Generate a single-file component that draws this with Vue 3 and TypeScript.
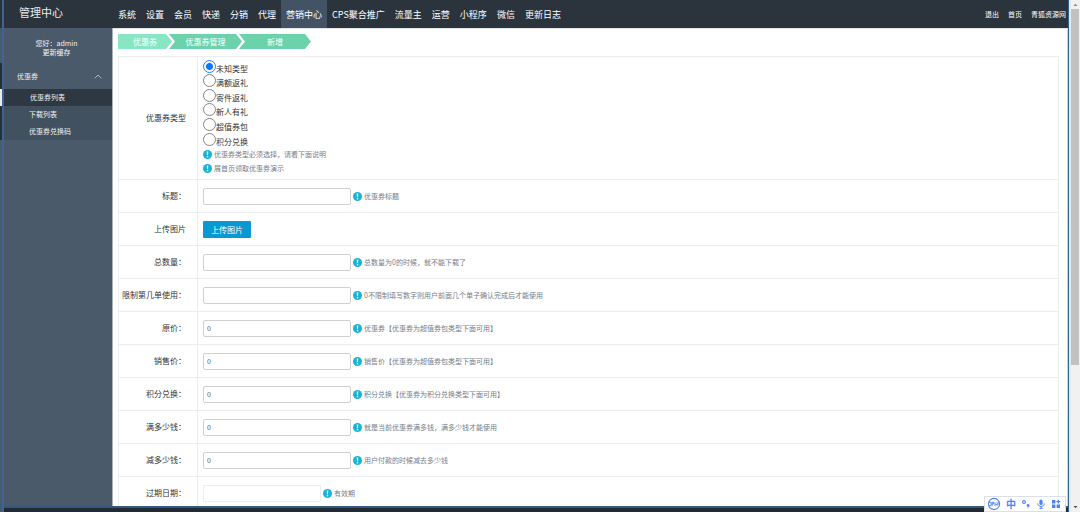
<script setup lang="ts">
import { ref } from 'vue'

interface Field {
  id: string
  label: string
  hint?: string
  value?: string
  kind: 'text' | 'upload' | 'date'
}

const navItems = ['系统', '设置', '会员', '快递', '分销', '代理', '营销中心', 'CPS聚合推广', '流量主', '运营', '小程序', '微信', '更新日志']
const activeNav = '营销中心'
const userLinks = ['退出', '首页', '青狐资源网']
const sideItems = ['优惠券列表', '下载列表', '优惠券兑换码']
const types = ['未知类型', '满额返礼', '寄件返礼', '新人有礼', '超值券包', '积分兑换']
const typeHints = ['优惠券类型必须选择，请看下面说明', '展首页领取优惠券演示']
const selectedType = ref('未知类型')

const fields = ref<Field[]>([
  { id: 'title', label: '标题：', hint: '优惠券标题', value: '', kind: 'text' },
  { id: 'image', label: '上传图片', kind: 'upload' },
  { id: 'total', label: '总数量：', hint: '总数量为0的时候，就不能下载了', value: '', kind: 'text' },
  { id: 'limit', label: '限制第几单使用：', hint: '0不限制填写数字则用户前面几个单子确认完成后才能使用', value: '', kind: 'text' },
  { id: 'price', label: '原价：', hint: '优惠券【优惠券为超值券包类型下面可用】', value: '0', kind: 'text' },
  { id: 'sale', label: '销售价：', hint: '销售价【优惠券为超值券包类型下面可用】', value: '0', kind: 'text' },
  { id: 'points', label: '积分兑换：', hint: '积分兑换【优惠券为积分兑换类型下面可用】', value: '0', kind: 'text' },
  { id: 'full', label: '满多少钱：', hint: '就是当前优惠券满多钱，满多少钱才能使用', value: '0', kind: 'text' },
  { id: 'minus', label: '减多少钱：', hint: '用户付款的时候减去多少钱', value: '0', kind: 'text' },
  { id: 'expire', label: '过期日期：', hint: '有效期', value: '', kind: 'date' },
])
</script>

<template>
  <div class="screen">
    <div class="edge" aria-hidden="true"></div>
    <div class="window">
      <header class="header">
        <h1 class="brand">管理中心</h1>
        <nav class="nav">
          <a v-for="n in navItems" :key="n" href="#" :class="{ active: n === activeNav }">{{ n }}</a>
        </nav>
        <nav class="user-links">
          <a v-for="u in userLinks" :key="u" href="#">{{ u }}</a>
        </nav>
      </header>

      <div class="body">
        <aside class="sidebar">
          <div class="greeting">
            <span>您好：admin</span>
            <a href="#">更新缓存</a>
          </div>
          <button class="group" type="button" aria-expanded="true">
            <span>优惠券</span>
            <svg width="8" height="5" viewBox="0 0 8 5" aria-hidden="true">
              <path d="M0.7 4.3 4 1l3.3 3.3" fill="none" stroke="#b8c2cc" stroke-width="0.9" />
            </svg>
          </button>
          <ul class="sub">
            <li v-for="(s, i) in sideItems" :key="s" :class="{ current: i === 0 }"><a href="#">{{ s }}</a></li>
          </ul>
        </aside>

        <main class="main">
          <nav class="crumbs">
            <a class="crumb first" href="#">优惠券</a>
            <a class="crumb middle" href="#">优惠券管理</a>
            <a class="crumb last" href="#">新增</a>
          </nav>

          <table class="form">
            <tbody>
              <tr class="type-row">
                <th scope="row">优惠券类型</th>
                <td>
                  <div class="radios" role="radiogroup" aria-label="优惠券类型">
                    <label v-for="t in types" :key="t">
                      <input v-model="selectedType" type="radio" name="type" :value="t" />
                      <span>{{ t }}</span>
                    </label>
                  </div>
                  <div v-for="h in typeHints" :key="h" class="hint stacked">
                    <svg class="mark" viewBox="0 0 9 9" aria-hidden="true">
                      <circle cx="4.5" cy="4.5" r="4.5" fill="#16b4d6" />
                      <path d="M3.7 1.4h1.6L5 5.3H4z" fill="#fff" />
                      <circle cx="4.5" cy="6.8" r="0.8" fill="#fff" />
                    </svg>
                    <span>{{ h }}</span>
                  </div>
                </td>
              </tr>
              <tr v-for="f in fields" :key="f.id">
                <th scope="row"><label :for="f.id">{{ f.label }}</label></th>
                <td>
                  <div class="line">
                    <button v-if="f.kind === 'upload'" :id="f.id" class="upload" type="button">上传图片</button>
                    <input v-else :id="f.id" v-model="f.value" type="text" :class="['field', f.kind]" />
                    <div v-if="f.hint" class="hint">
                      <svg class="mark" viewBox="0 0 9 9" aria-hidden="true">
                        <circle cx="4.5" cy="4.5" r="4.5" fill="#16b4d6" />
                        <path d="M3.7 1.4h1.6L5 5.3H4z" fill="#fff" />
                        <circle cx="4.5" cy="6.8" r="0.8" fill="#fff" />
                      </svg>
                      <span>{{ f.hint }}</span>
                    </div>
                  </div>
                </td>
              </tr>
            </tbody>
          </table>
        </main>
      </div>
    </div>

    <div class="scrollbar" aria-hidden="true">
      <svg width="9" height="9" viewBox="0 0 9 9"><path d="M2.5 6 4.5 3.7 6.5 6z" fill="#8a8a8a" /></svg>
      <div class="track"><div class="thumb"></div></div>
      <svg width="9" height="9" viewBox="0 0 9 9"><path d="M2.5 3 4.5 5.3 6.5 3z" fill="#505050" /></svg>
    </div>

    <div class="ime">
      <svg width="14" height="14" viewBox="0 0 14 14" aria-hidden="true">
        <circle cx="7" cy="7" r="5.6" fill="none" stroke="#4e83f5" stroke-width="1.1" />
        <path d="M2 5.2h2.2v3.4H2M5.2 8.8V5.2h1.4v1.7H5.2M8 5.2v3.4l1.1-1.4 1.1 1.4V5.2M11 5.2h1.5M11 7h1.3" fill="none" stroke="#4e83f5" stroke-width="0.9" />
      </svg>
      <span class="lang">中</span>
      <svg width="10" height="10" viewBox="0 0 10 10" aria-hidden="true">
        <circle cx="3" cy="3" r="1.4" fill="none" stroke="#4e83f5" stroke-width="1.1" />
        <circle cx="7" cy="6.4" r="1.3" fill="#4e83f5" />
        <path d="M8 6.4c.1 1.2-.5 1.9-1.4 2.3" fill="none" stroke="#4e83f5" stroke-width="0.9" />
      </svg>
      <svg width="10" height="10" viewBox="0 0 10 10" aria-hidden="true">
        <rect x="3.4" y="0.4" width="3.2" height="5.6" rx="1.6" fill="#4e83f5" />
        <path d="M1.7 4.4c0 4 6.6 4 6.6 0M5 7.4v2M3.4 9.4h3.2" fill="none" stroke="#4e83f5" stroke-width="1" />
      </svg>
      <svg width="10" height="10" viewBox="0 0 10 10" aria-hidden="true">
        <path d="M1 1h3.4v3.4H1zM1 5.6h3.4V9H1zM5.6 5.6H9V9H5.6z" fill="#4e83f5" />
        <path d="M7.3 0.8v3.8M5.4 2.7h3.8" stroke="#4e83f5" stroke-width="1.3" />
      </svg>
    </div>
  </div>
</template>

<style>
html,
body {
  margin: 0;
  overflow: hidden;
}
</style>

<style scoped>
* {
  box-sizing: border-box;
}

.screen {
  position: relative;
  display: flex;
  height: 100vh;
  overflow: hidden;
  background: #fff;
  font-family: 'Noto Sans CJK SC', sans-serif;
  font-size: 8px;
  line-height: 12px;
  color: #333;
}

a {
  color: inherit;
  text-decoration: none;
}

button,
input {
  font-family: inherit;
  margin: 0;
}

.edge {
  flex: none;
  width: 2px;
  background: linear-gradient(
    #2b333c 28px,
    #4a5a6b 28px 63px,
    #27303a 63px 89px,
    #e8ecef 89px 106px,
    #27303a 106px 140px,
    #4a5a6b 140px
  );
}

.window {
  flex: 1;
  min-width: 0;
  display: flex;
  flex-direction: column;
  border-left: 2px solid #3d6492;
  border-right: 1px solid #34628f;
  background: #222b34;
  padding-bottom: 4px;
}

.header {
  flex: none;
  display: flex;
  align-items: stretch;
  height: 28px;
  background: #2b333c;
  color: #fff;
}

.brand {
  flex: none;
  width: 109px;
  margin: 0;
  padding-left: 15px;
  font-size: 11px;
  font-weight: 400;
  line-height: 25px;
  color: #e8eaec;
}

.nav {
  display: flex;
  font-size: 9px;
  line-height: 29px;
  white-space: nowrap;
}

.nav a {
  padding: 0 5px;
}

.nav a.active {
  background: #435363;
}

.user-links {
  display: flex;
  gap: 9px;
  margin-left: auto;
  padding-right: 2px;
  font-size: 7px;
  line-height: 28px;
  white-space: nowrap;
}

.body {
  flex: 1;
  min-height: 0;
  display: flex;
  border-bottom: 2px solid #34597f;
}

.sidebar {
  flex: none;
  width: 109px;
  border-right: 1px solid #a9b1ba;
  background: #4a5a6b;
  color: #f0f3f5;
  font-size: 7px;
}

.greeting {
  display: flex;
  flex-direction: column;
  align-items: center;
  padding: 11px 3px 8px 0;
  line-height: 9px;
}

.group {
  display: flex;
  align-items: center;
  justify-content: space-between;
  width: 100%;
  height: 24px;
  padding: 0 10px 2px 13px;
  border: 0;
  background: none;
  color: inherit;
  font-size: 7px;
}

.sub {
  margin: 0;
  padding: 0;
  list-style: none;
  line-height: 17px;
  background: #42515f;
}

.sub a {
  display: block;
  padding-left: 25px;
}

.sub .current {
  background: #2e3843;
}

.sub .current a {
  padding-left: 26px;
}

.main {
  flex: 1;
  min-width: 0;
  padding: 5px 8px 0 5px;
  border-top: 1px solid #e4e6e8;
  border-right: 1px solid #c8d4e0;
  background: #fff;
  overflow: hidden;
}

.crumbs {
  display: flex;
  height: 15px;
  margin-bottom: 7px;
  color: #fff;
  line-height: 15px;
  text-align: center;
}

.crumb {
  background: #6bd2ac;
}

.first {
  width: 54px;
  background: #89e6c4;
  clip-path: polygon(0 0, 48px 0, 100% 50%, 48px 100%, 0 100%);
}

.middle {
  width: 73px;
  margin-left: -3px;
  clip-path: polygon(0 0, 67px 0, 100% 50%, 67px 100%, 0 100%, 6px 50%);
}

.last {
  width: 72px;
  margin-left: -3px;
  clip-path: polygon(0 0, 66px 0, 100% 50%, 66px 100%, 0 100%, 6px 50%);
}

.form {
  width: 100%;
  border-collapse: collapse;
}

.form th,
.form td {
  height: 33px;
  padding: 0 5px;
  border: 1px solid #ebedf0;
  vertical-align: middle;
}

.form th {
  width: 79px;
  padding: 0 11px 0 0;
  font-weight: 400;
  text-align: right;
  white-space: nowrap;
}

.form .type-row > * {
  height: 123px;
}

.form .type-row td {
  padding-bottom: 2px;
}

.radios {
  display: grid;
  height: 88px;
}

.radios label {
  display: flex;
  align-items: center;
  height: 14px;
}

.radios input {
  appearance: none;
  flex: none;
  width: 13px;
  height: 13px;
  border: 1px solid #858585;
  border-radius: 50%;
  background: #fff;
}

.radios input:checked {
  border-color: #2680ff;
  background: radial-gradient(circle, #0a75ff 3px, #fff 4px);
}

.radios span {
  padding-top: 5px;
}

.line,
.hint {
  display: flex;
  align-items: center;
}

.line {
  gap: 2px;
}

.hint {
  gap: 2px;
  font-size: 7px;
  color: #747e8b;
  white-space: nowrap;
}

.hint.stacked {
  height: 14px;
}

.mark {
  width: 9px;
  height: 9px;
}

.field {
  width: 148px;
  height: 17px;
  padding: 0 3px;
  border: 1px solid #d0d0d0;
  border-radius: 2px;
  background: #fff;
  color: #555;
  font-size: 7px;
}

.field.date {
  width: 118px;
  border-color: #eee;
  border-radius: 0;
}

.upload {
  height: 17px;
  padding: 0 8px;
  border: 0;
  border-radius: 1px;
  background: #0799cf;
  color: #fff;
  font-size: 8px;
  line-height: 17px;
}

.scrollbar {
  flex: none;
  display: flex;
  flex-direction: column;
  align-items: center;
  width: 11px;
  background: #f1f1f1;
  border-left: 2px solid #e3eaf1;
}

.track {
  flex: 1;
  align-self: stretch;
  padding: 0 1px 0 0;
}

.thumb {
  height: 72%;
  background: #c1c1c1;
}

/* Input-method toolbar floating over the page */
.ime {
  position: absolute;
  right: 14px;
  bottom: 0;
  display: flex;
  align-items: center;
  gap: 5px;
  height: 16px;
  padding: 0 4px 0 2px;
  border: 1px solid #dcdfe6;
  background: #fff;
  color: #4e83f5;
}

.lang {
  font-size: 10px;
  font-weight: 700;
}
</style>
